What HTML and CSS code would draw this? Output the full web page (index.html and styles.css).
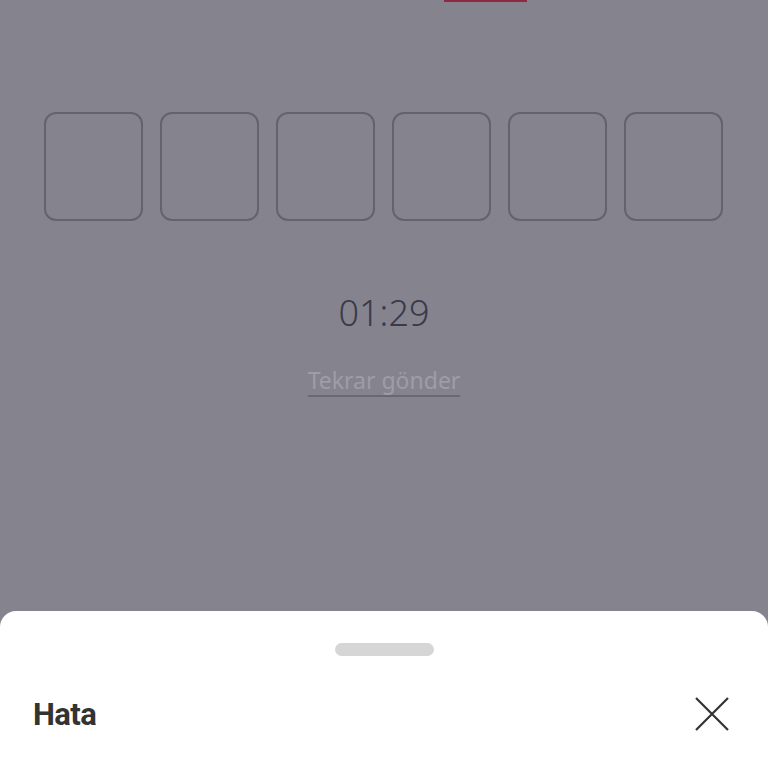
FILE: index.html
```html
<!DOCTYPE html>
<html lang="tr">

<head>
    <meta charset="UTF-8">
    <meta name="viewport" content="width=device-width, initial-scale=1.0">
    <title>Doğrulama</title>
    <link rel="stylesheet" href="styles.css">
</head>

<body>
    <article class="layout">
        <main class="content">
            <div class="top-link-row">
                <a class="top-link" href="#">Değiştir</a>
            </div>
            <div class="code-boxes">
                <div class="code-box"></div>
                <div class="code-box"></div>
                <div class="code-box"></div>
                <div class="code-box"></div>
                <div class="code-box"></div>
                <div class="code-box"></div>
            </div>
            <p class="timer">01:29</p>
            <div class="resend-row">
                <a class="resend" href="#">Tekrar gönder</a>
            </div>
        </main>
        <section class="sheet">
            <div class="handle"></div>
            <div class="sheet-header">
                <h3 class="sheet-title">Hata</h3>
                <button class="close" aria-label="Kapat">
                    <svg width="34" height="34" viewBox="0 0 34 34">
                        <path d="M1 1 L33 33 M33 1 L1 33" stroke="#333333" stroke-width="2.2" fill="none" />
                    </svg>
                </button>
            </div>
        </section>
    </article>
</body>

</html>
```

FILE: styles.css
```css
html,
body {
    margin: 0;
    padding: 0;
}

body {
    background: #85848e;
    color: #3a3a48;
    font-family: "Noto Sans", "Open Sans", Arial, sans-serif;
    width: 768px;
    height: 768px;
    overflow: hidden;
}

.layout {
    display: flex;
    flex-direction: column;
    height: 768px;
}

.content {
    flex: 1;
    display: flex;
    flex-direction: column;
}

.top-link-row {
    display: flex;
    padding-left: 444px;
    margin-top: -32px;
    height: 34px;
}

.top-link {
    color: #8f2842;
    font-size: 24px;
    line-height: 32px;
    text-decoration: none;
    border-bottom: 2px solid #8f2842;
    width: 83px;
    overflow: hidden;
}

.code-boxes {
    display: flex;
    gap: 17px;
    padding-left: 44px;
    margin-top: 110px;
}

.code-box {
    box-sizing: border-box;
    width: 99px;
    height: 109px;
    border: 2px solid #64636c;
    border-radius: 12px;
}

.timer {
    margin: 70px 0 0;
    text-align: center;
    font-size: 36px;
    font-weight: 300;
    line-height: 44px;
    color: #3a3a4a;
}

.resend-row {
    display: flex;
    justify-content: center;
    margin-top: 30px;
}

.resend {
    color: #9e9da6;
    font-size: 23px;
    line-height: 30px;
    text-decoration: none;
    border-bottom: 2px solid #6a6973;
}

.sheet {
    background: #ffffff;
    border-radius: 16px 16px 0 0;
    height: 157px;
    display: flex;
    flex-direction: column;
}

.handle {
    width: 99px;
    height: 13px;
    border-radius: 7px;
    background: #d6d6d6;
    margin: 32px auto 0;
}

.sheet-header {
    display: flex;
    align-items: center;
    justify-content: space-between;
    padding: 0 39px 0 33px;
    margin-top: 39px;
}

.sheet-title {
    margin: 3px 0 0;
    font-family: "Liberation Sans Narrow", Roboto, "Liberation Sans", sans-serif;
    font-weight: 700;
    font-size: 31px;
    letter-spacing: -0.6px;
    line-height: 34px;
    color: #333333;
}

.close {
    background: none;
    border: 0;
    padding: 0;
    width: 34px;
    height: 34px;
    display: flex;
}
```
